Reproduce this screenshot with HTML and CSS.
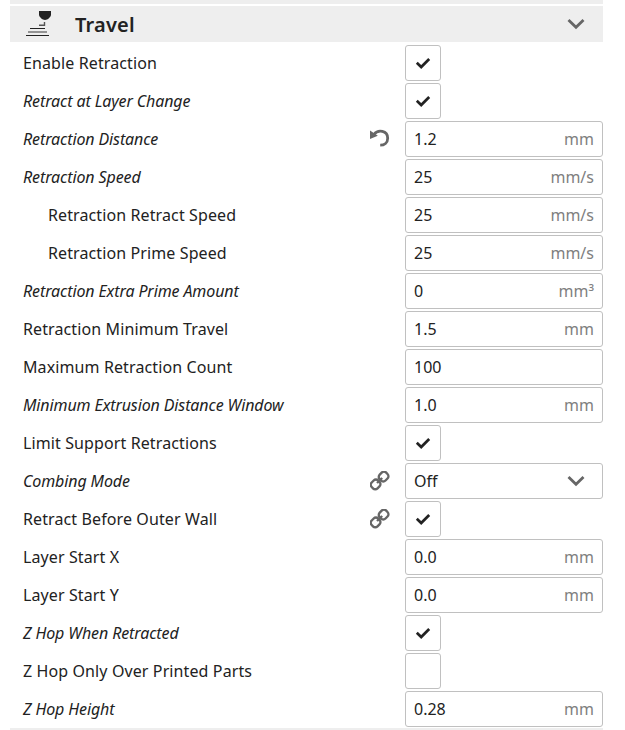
FILE: index.html
```html
<!DOCTYPE html>
<html lang="en">
<head>
    <meta charset="UTF-8">
    <meta name="viewport" content="width=device-width, initial-scale=1.0">
    <title>Travel Settings</title>
    <link rel="stylesheet" href="styles.css">
</head>
<body>
    <!-- shared icons -->
    <svg class="icon-defs" aria-hidden="true">
        <symbol id="check" viewBox="0 0 16 14">
            <path d="M1.8 6.8L6.2 11L14.2 3" fill="none" stroke="#222" stroke-width="2.7"/>
        </symbol>
        <symbol id="chevron" viewBox="0 0 18 12">
            <path d="M1.5 2L9 9.2L16.5 2" fill="none" stroke="#666" stroke-width="2.8"/>
        </symbol>
        <symbol id="link" viewBox="0 0 20 20">
            <g fill="none" stroke="#666" stroke-width="2.4">
                <rect x="1" y="9.3" width="9.2" height="8.2" rx="3.2" transform="rotate(-45 5.6 13.4)"/>
                <rect x="9" y="1.5" width="9.2" height="8.2" rx="3.2" transform="rotate(-45 13.6 5.6)"/>
                <path d="M7 12L12.2 7"/>
            </g>
        </symbol>
        <symbol id="reset" viewBox="0 0 20 20">
            <path d="M4 5.3C8 0.3 17.7 1.4 17.7 9.3C17.7 13.6 14.3 16.2 10.2 16.2" fill="none" stroke="#666" stroke-width="2.8"/>
            <path d="M0 1.5V10L7.8 6.8Z" fill="#666"/>
        </symbol>
    </svg>

    <div class="settings">
        <div class="previous-category"></div>
        <div class="category">
            <svg class="category-icon" viewBox="0 0 26 28">
                <path d="M14 1H26V4.5C26 7 22.5 10 20 10S14 7 14 4.5Z" fill="#222"/>
                <path d="M14 15.2H19.5V12" fill="none" stroke="#555" stroke-width="1.4"/>
                <path d="M5 18.5H20M1 25.5H24" stroke="#222" stroke-width="1.2"/>
                <path d="M3 22H22" stroke="#888" stroke-width="1.8"/>
            </svg>
            <h1>Travel</h1>
            <svg class="chevron"><use href="#chevron"/></svg>
        </div>

        <div class="row">
            <span class="label">Enable Retraction</span>
            <div class="checkbox"><svg class="check"><use href="#check"/></svg></div>
        </div>
        <div class="row">
            <span class="label extruder">Retract at Layer Change</span>
            <div class="checkbox"><svg class="check"><use href="#check"/></svg></div>
        </div>
        <div class="row">
            <span class="label extruder">Retraction Distance</span>
            <svg class="row-icon"><use href="#reset"/></svg>
            <div class="field"><span>1.2</span><span class="unit">mm</span></div>
        </div>
        <div class="row">
            <span class="label extruder">Retraction Speed</span>
            <div class="field"><span>25</span><span class="unit">mm/s</span></div>
        </div>
        <div class="row">
            <span class="label child">Retraction Retract Speed</span>
            <div class="field"><span>25</span><span class="unit">mm/s</span></div>
        </div>
        <div class="row">
            <span class="label child">Retraction Prime Speed</span>
            <div class="field"><span>25</span><span class="unit">mm/s</span></div>
        </div>
        <div class="row">
            <span class="label extruder">Retraction Extra Prime Amount</span>
            <div class="field"><span>0</span><span class="unit">mm³</span></div>
        </div>
        <div class="row">
            <span class="label">Retraction Minimum Travel</span>
            <div class="field"><span>1.5</span><span class="unit">mm</span></div>
        </div>
        <div class="row">
            <span class="label">Maximum Retraction Count</span>
            <div class="field"><span>100</span></div>
        </div>
        <div class="row">
            <span class="label extruder">Minimum Extrusion Distance Window</span>
            <div class="field"><span>1.0</span><span class="unit">mm</span></div>
        </div>
        <div class="row">
            <span class="label">Limit Support Retractions</span>
            <div class="checkbox"><svg class="check"><use href="#check"/></svg></div>
        </div>
        <div class="row">
            <span class="label extruder">Combing Mode</span>
            <svg class="row-icon"><use href="#link"/></svg>
            <div class="field select"><span>Off</span><svg class="chevron"><use href="#chevron"/></svg></div>
        </div>
        <div class="row">
            <span class="label">Retract Before Outer Wall</span>
            <svg class="row-icon"><use href="#link"/></svg>
            <div class="checkbox"><svg class="check"><use href="#check"/></svg></div>
        </div>
        <div class="row">
            <span class="label">Layer Start X</span>
            <div class="field"><span>0.0</span><span class="unit">mm</span></div>
        </div>
        <div class="row">
            <span class="label">Layer Start Y</span>
            <div class="field"><span>0.0</span><span class="unit">mm</span></div>
        </div>
        <div class="row">
            <span class="label extruder">Z Hop When Retracted</span>
            <div class="checkbox"><svg class="check"><use href="#check"/></svg></div>
        </div>
        <div class="row">
            <span class="label">Z Hop Only Over Printed Parts</span>
            <div class="checkbox"></div>
        </div>
        <div class="row">
            <span class="label extruder">Z Hop Height</span>
            <div class="field"><span>0.28</span><span class="unit">mm</span></div>
        </div>
        <div class="next-category"></div>
    </div>
</body>
</html>
```
FILE: styles.css
```css
* {
    box-sizing: border-box;
}

body {
    margin: 0;
    height: 730px;
    overflow: hidden;
    background-color: #fff;
    color: #222;
    font-family: "Noto Sans", sans-serif;
    font-size: 16px;
    line-height: 22px;
}

svg {
    display: block;
    flex-shrink: 0;
}

.icon-defs {
    display: none;
}

.settings {
    width: 593px;
    margin-left: 10px;
}

.previous-category {
    height: 4px;
    margin-bottom: 2px;
    background-color: #eee;
}

.category {
    display: flex;
    align-items: center;
    height: 36px;
    margin-bottom: 3px;
    padding: 0 18px 0 15px;
    background-color: #eee;
}

.category-icon {
    width: 26px;
    height: 28px;
}

h1 {
    flex: 1;
    margin: 0 0 0 24px;
    padding-top: 2px;
    font-size: 20px;
    font-weight: 600;
    line-height: 28px;
    letter-spacing: 0.2px;
}

.chevron {
    width: 18px;
    height: 12px;
}

.row {
    display: flex;
    align-items: center;
    height: 36px;
    margin-bottom: 2px;
    padding-left: 13px;
}

.label {
    flex: 1;
    white-space: nowrap;
    letter-spacing: 0.11px;
}

.extruder {
    font-style: italic;
    letter-spacing: -0.11px;
}

.child {
    padding-left: 25px;
}

.row-icon {
    width: 20px;
    height: 20px;
    margin-right: 15px;
}

.field,
.checkbox {
    display: flex;
    align-items: center;
    height: 36px;
    border: 1px solid #c0c0c0;
    border-radius: 3px;
}

.field {
    justify-content: space-between;
    width: 198px;
    padding: 0 8px;
}

.select {
    padding-right: 17px;
}

.checkbox {
    justify-content: center;
    width: 36px;
    margin-right: 162px;
}

.check {
    width: 16px;
    height: 14px;
}

.unit {
    color: #808080;
}

.next-category {
    height: 2px;
    margin-top: -1px;
    background-color: #eee;
}
```
